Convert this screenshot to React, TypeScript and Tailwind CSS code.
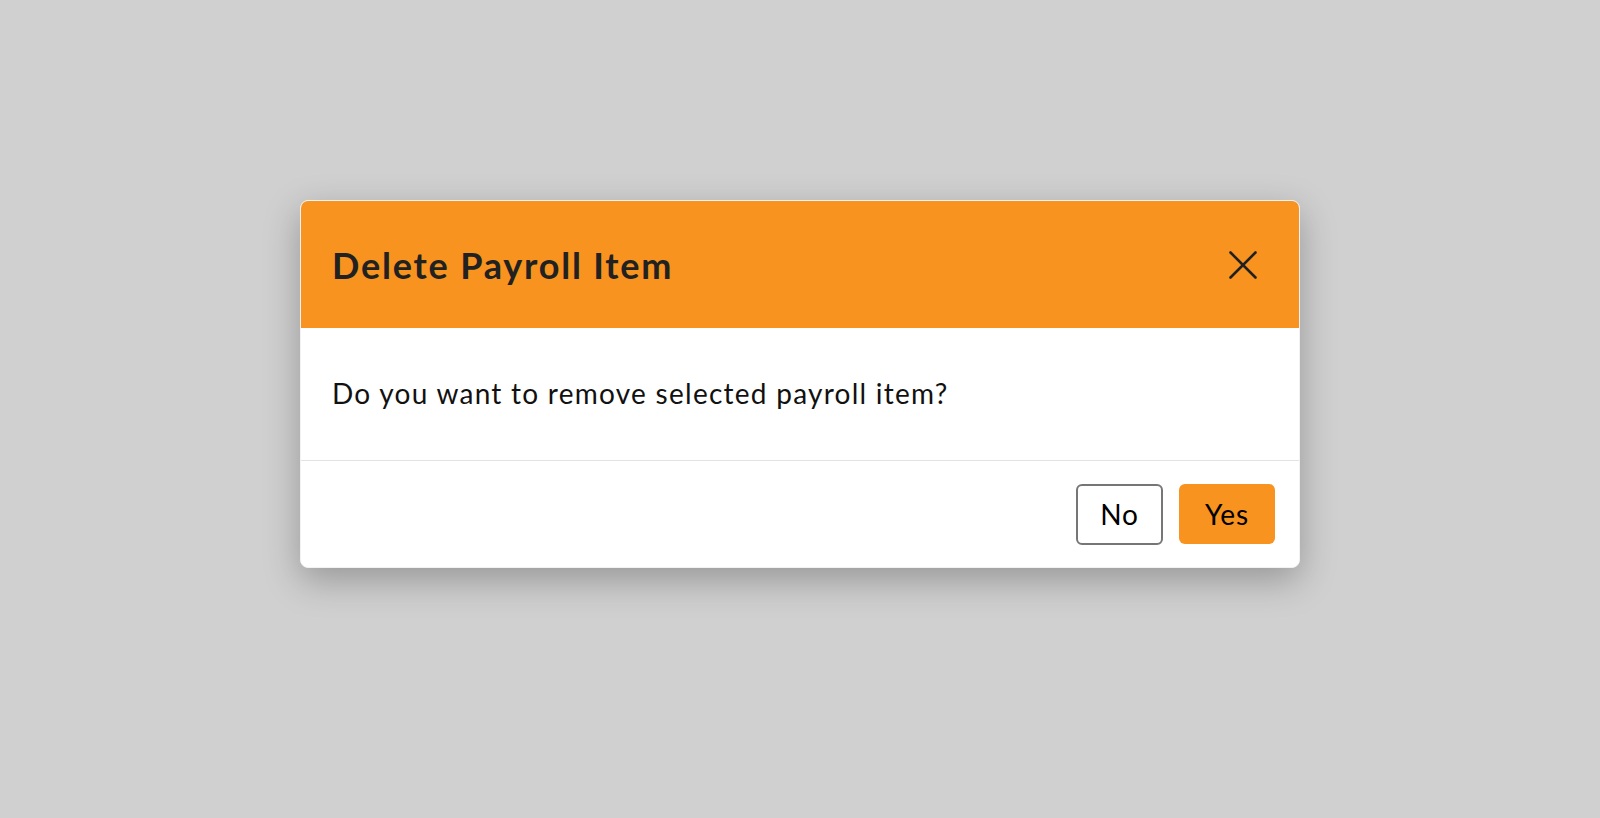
export default function App() {
  return (
    <div
      className="min-h-screen bg-[#d0d0d0] flex justify-center pt-[200px]"
      style={{ fontFamily: 'Lato, "Noto Sans", sans-serif' }}
    >
      <div className="w-[1000px] h-fit rounded-lg border border-[#f2f2f2] bg-white overflow-hidden shadow-[0_12px_36px_rgba(0,0,0,0.28)]">
        {/* Header */}
        <div className="h-[127px] bg-[#f7931e] flex items-center justify-between pl-[31px] pr-[42px]">
          <h2 className="text-[36px] font-bold text-[#212121] leading-none tracking-[0.05em]">Delete Payroll Item</h2>
          <button className="w-[28px] h-[28px] flex items-center justify-center text-[#212121]">
            <svg width="28" height="28" viewBox="0 0 28 28" fill="none" stroke="currentColor" strokeWidth="2.6" strokeLinecap="round">
              <path d="M1.5 1.5 L26.5 26.5 M26.5 1.5 L1.5 26.5" />
            </svg>
          </button>
        </div>

        {/* Body */}
        <div className="h-[132px] flex items-center px-[31px] pb-[2px]">
          <p className="text-[28px] text-[#111] leading-none tracking-[0.045em]">Do you want to remove selected payroll item?</p>
        </div>

        {/* Footer */}
        <div className="h-[107px] border-t border-[#e3e3e3] flex items-center justify-end gap-4 px-[24px]">
          <button className="w-[87px] h-[61px] rounded-md border-2 border-[#767676] bg-white text-[28px] text-black tracking-[0.03em]">
            No
          </button>
          <button className="w-[96px] h-[60px] rounded-md bg-[#f7931e] text-[28px] text-black tracking-[0.03em]">
            Yes
          </button>
        </div>
      </div>
    </div>
  )
}
